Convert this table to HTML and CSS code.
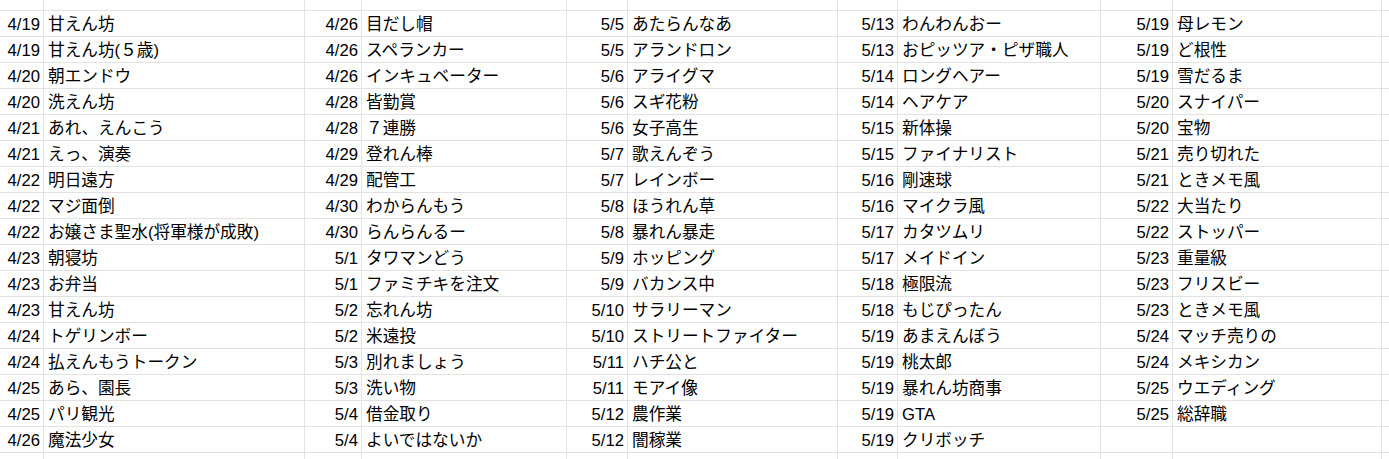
FILE: index.html
```html
<!DOCTYPE html>
<html lang="ja">
<head>
<meta charset="utf-8">
<title>Sheet</title>
<link rel="stylesheet" href="styles.css">
</head>
<body>
<div class="sheet">
<div class="c"></div><div class="c"></div><div class="c"></div><div class="c"></div><div class="c"></div><div class="c"></div><div class="c"></div><div class="c"></div><div class="c"></div><div class="c"></div><div class="c"></div>

<div class="c d">4/19</div><div class="c t">甘えん坊</div><div class="c d">4/26</div><div class="c t">目だし帽</div><div class="c d">5/5</div><div class="c t">あたらんなあ</div><div class="c d">5/13</div><div class="c t">わんわんおー</div><div class="c d">5/19</div><div class="c t">母レモン</div><div class="c"></div>
<div class="c d">4/19</div><div class="c t">甘えん坊(５歳)</div><div class="c d">4/26</div><div class="c t">スペランカー</div><div class="c d">5/5</div><div class="c t">アランドロン</div><div class="c d">5/13</div><div class="c t">おピッツア・ピザ職人</div><div class="c d">5/19</div><div class="c t">ど根性</div><div class="c"></div>
<div class="c d">4/20</div><div class="c t">朝エンドウ</div><div class="c d">4/26</div><div class="c t">インキュベーター</div><div class="c d">5/6</div><div class="c t">アライグマ</div><div class="c d">5/14</div><div class="c t">ロングヘアー</div><div class="c d">5/19</div><div class="c t">雪だるま</div><div class="c"></div>
<div class="c d">4/20</div><div class="c t">洗えん坊</div><div class="c d">4/28</div><div class="c t">皆勤賞</div><div class="c d">5/6</div><div class="c t">スギ花粉</div><div class="c d">5/14</div><div class="c t">ヘアケア</div><div class="c d">5/20</div><div class="c t">スナイパー</div><div class="c"></div>
<div class="c d">4/21</div><div class="c t">あれ、えんこう</div><div class="c d">4/28</div><div class="c t">７連勝</div><div class="c d">5/6</div><div class="c t">女子高生</div><div class="c d">5/15</div><div class="c t">新体操</div><div class="c d">5/20</div><div class="c t">宝物</div><div class="c"></div>
<div class="c d">4/21</div><div class="c t">えっ、演奏</div><div class="c d">4/29</div><div class="c t">登れん棒</div><div class="c d">5/7</div><div class="c t">歌えんぞう</div><div class="c d">5/15</div><div class="c t">ファイナリスト</div><div class="c d">5/21</div><div class="c t">売り切れた</div><div class="c"></div>
<div class="c d">4/22</div><div class="c t">明日遠方</div><div class="c d">4/29</div><div class="c t">配管工</div><div class="c d">5/7</div><div class="c t">レインボー</div><div class="c d">5/16</div><div class="c t">剛速球</div><div class="c d">5/21</div><div class="c t">ときメモ風</div><div class="c"></div>
<div class="c d">4/22</div><div class="c t">マジ面倒</div><div class="c d">4/30</div><div class="c t">わからんもう</div><div class="c d">5/8</div><div class="c t">ほうれん草</div><div class="c d">5/16</div><div class="c t">マイクラ風</div><div class="c d">5/22</div><div class="c t">大当たり</div><div class="c"></div>
<div class="c d">4/22</div><div class="c t">お嬢さま聖水(将軍様が成敗)</div><div class="c d">4/30</div><div class="c t">らんらんるー</div><div class="c d">5/8</div><div class="c t">暴れん暴走</div><div class="c d">5/17</div><div class="c t">カタツムリ</div><div class="c d">5/22</div><div class="c t">ストッパー</div><div class="c"></div>
<div class="c d">4/23</div><div class="c t">朝寝坊</div><div class="c d">5/1</div><div class="c t">タワマンどう</div><div class="c d">5/9</div><div class="c t">ホッピング</div><div class="c d">5/17</div><div class="c t">メイドイン</div><div class="c d">5/23</div><div class="c t">重量級</div><div class="c"></div>
<div class="c d">4/23</div><div class="c t">お弁当</div><div class="c d">5/1</div><div class="c t">ファミチキを注文</div><div class="c d">5/9</div><div class="c t">バカンス中</div><div class="c d">5/18</div><div class="c t">極限流</div><div class="c d">5/23</div><div class="c t">フリスビー</div><div class="c"></div>
<div class="c d">4/23</div><div class="c t">甘えん坊</div><div class="c d">5/2</div><div class="c t">忘れん坊</div><div class="c d">5/10</div><div class="c t">サラリーマン</div><div class="c d">5/18</div><div class="c t">もじぴったん</div><div class="c d">5/23</div><div class="c t">ときメモ風</div><div class="c"></div>
<div class="c d">4/24</div><div class="c t">トゲリンボー</div><div class="c d">5/2</div><div class="c t">米遠投</div><div class="c d">5/10</div><div class="c t">ストリートファイター</div><div class="c d">5/19</div><div class="c t">あまえんぼう</div><div class="c d">5/24</div><div class="c t">マッチ売りの</div><div class="c"></div>
<div class="c d">4/24</div><div class="c t">払えんもうトークン</div><div class="c d">5/3</div><div class="c t">別れましょう</div><div class="c d">5/11</div><div class="c t">ハチ公と</div><div class="c d">5/19</div><div class="c t">桃太郎</div><div class="c d">5/24</div><div class="c t">メキシカン</div><div class="c"></div>
<div class="c d">4/25</div><div class="c t">あら、園長</div><div class="c d">5/3</div><div class="c t">洗い物</div><div class="c d">5/11</div><div class="c t">モアイ像</div><div class="c d">5/19</div><div class="c t">暴れん坊商事</div><div class="c d">5/25</div><div class="c t">ウエディング</div><div class="c"></div>
<div class="c d">4/25</div><div class="c t">パリ観光</div><div class="c d">5/4</div><div class="c t">借金取り</div><div class="c d">5/12</div><div class="c t">農作業</div><div class="c d">5/19</div><div class="c t">GTA</div><div class="c d">5/25</div><div class="c t">総辞職</div><div class="c"></div>
<div class="c d">4/26</div><div class="c t">魔法少女</div><div class="c d">5/4</div><div class="c t">よいではないか</div><div class="c d">5/12</div><div class="c t">闇稼業</div><div class="c d">5/19</div><div class="c t">クリボッチ</div><div class="c d"></div><div class="c t"></div><div class="c"></div>

<div class="c"></div><div class="c"></div><div class="c"></div><div class="c"></div><div class="c"></div><div class="c"></div><div class="c"></div><div class="c"></div><div class="c"></div><div class="c"></div><div class="c"></div>
</div>
</body>
</html>
```

FILE: styles.css
```css
html, body {
  margin: 0;
  padding: 0;
  background: #ffffff;
  overflow: hidden;
}

.sheet {
  display: grid;
  grid-template-columns: 44px 261px 57px 205px 61px 210px 60px 203px 72px 209px 40px;
  grid-template-rows: 11px repeat(17, 26px) 26px;
  font-family: "Liberation Sans", Arial, "Noto Sans CJK JP", sans-serif;
  font-size: 16.67px;
  color: #000000;
}

.c {
  box-sizing: border-box;
  border-right: 1px solid #e2e2e2;
  border-bottom: 1px solid #e2e2e2;
  height: 100%;
  overflow: hidden;
  white-space: nowrap;
  line-height: 25px;
}

.d {
  text-align: right;
  padding: 1px 3px 0 0;
}

.t {
  text-align: left;
  padding: 1px 0 0 4px;
}
```
